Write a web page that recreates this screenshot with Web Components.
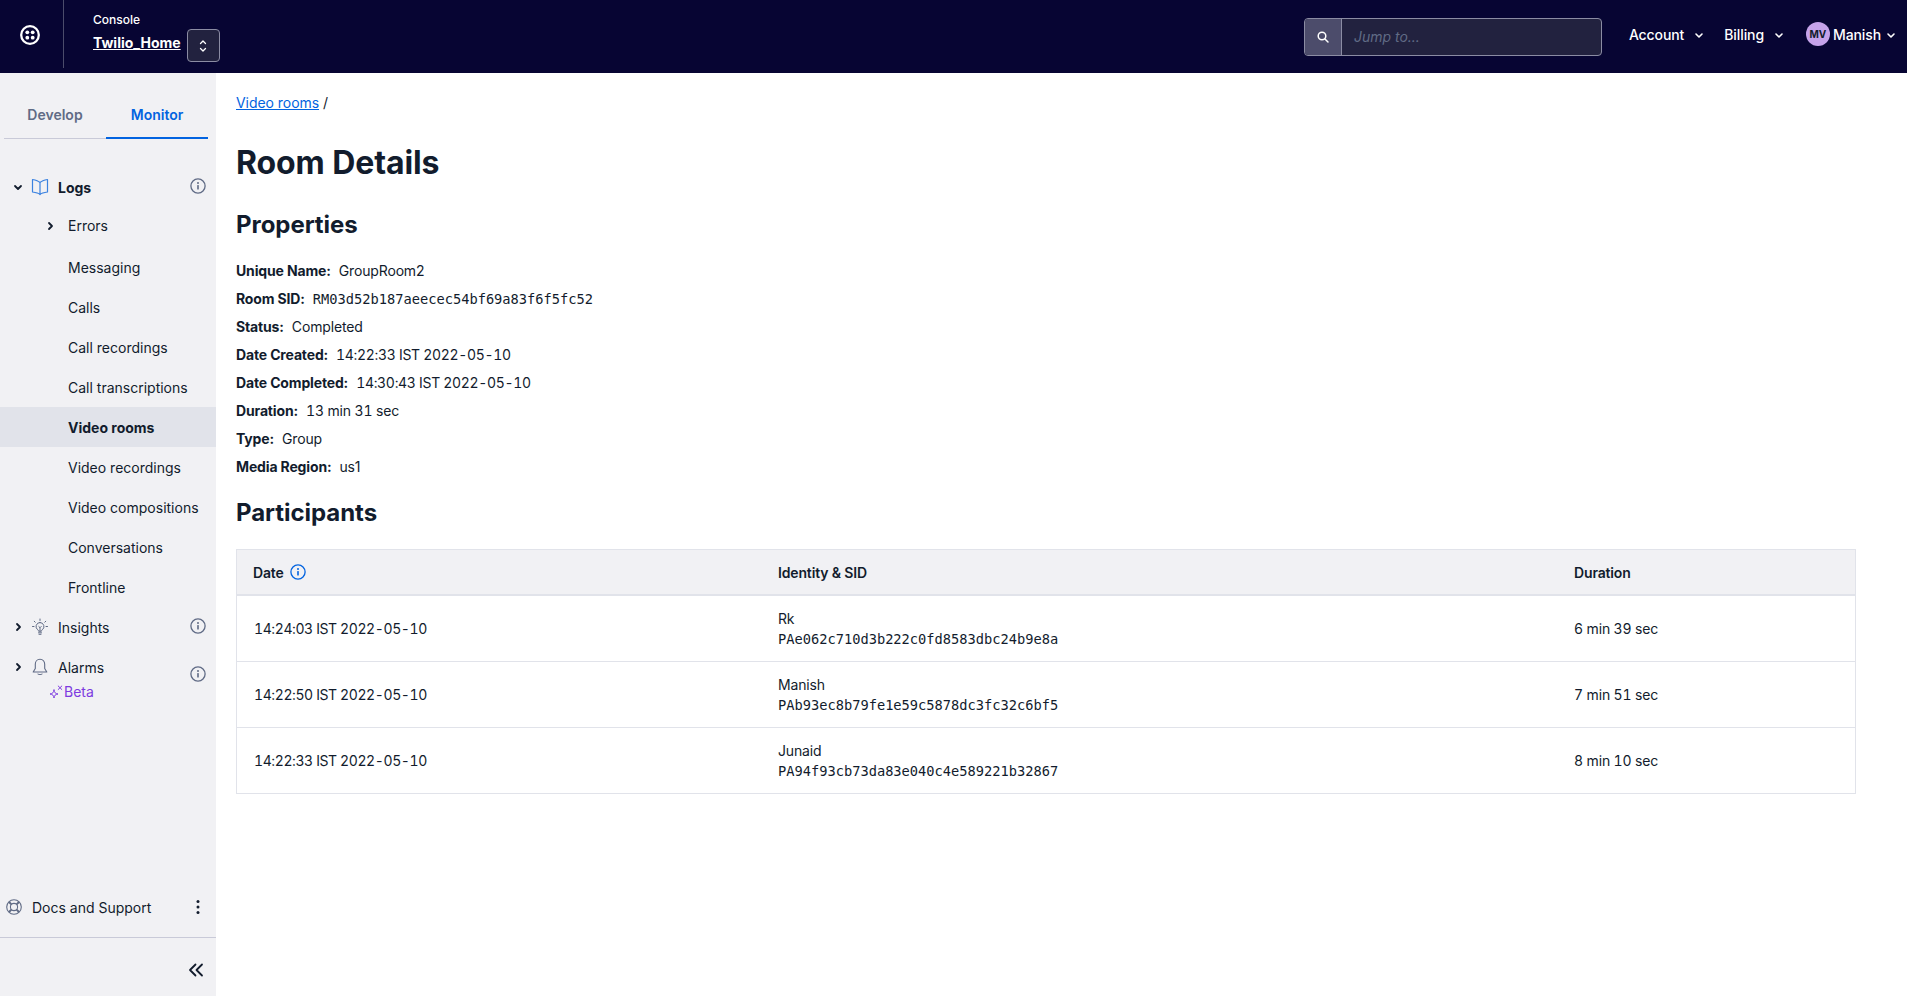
<!DOCTYPE html>
<html>
<head>
<meta charset="utf-8">
<style>
  html, body { margin: 0; height: 100%; }
  body { font-family: "Inter", sans-serif; color: #121c2d; background: #fff; overflow: hidden; }
  app-shell { height: 996px; }
</style>
</head>
<body>
<app-shell>
  <top-bar slot="top"></top-bar>
  <side-nav slot="side"></side-nav>
  <room-details></room-details>
</app-shell>

<script>
const infoIcon = (color, size) => `<svg width="${size}" height="${size}" viewBox="0 0 16 16" fill="none"><circle cx="8" cy="8" r="7.1" stroke="${color}" stroke-width="1.300"/><circle cx="8" cy="4.900" r="1" fill="${color}"/><rect x="7.200" y="6.900" width="1.600" height="4.600" rx=".6" fill="${color}"/></svg>`;
const chevron = (dir, color, w) => {
  const d = dir === "down" ? "M2 4l3 3 3-3" : dir === "right" ? "M4 2l3 3-3 3" : "";
  return `<svg width="10" height="10" viewBox="0 0 10 10" fill="none"><path d="${d}" stroke="${color}" stroke-width="${w}" stroke-linecap="round" stroke-linejoin="round"/></svg>`;
};

class AppShell extends HTMLElement {
  constructor() {
    super();
    this.attachShadow({mode: "open"}).innerHTML = `
    <style>
      :host { display: grid; grid-template-rows: 73px 1fr; grid-template-columns: 216px 1fr; }
      .top { grid-column: 1 / 3; }
    </style>
    <div class="top"><slot name="top"></slot></div>
    <slot name="side"></slot>
    <slot></slot>`;
  }
}

class TopBar extends HTMLElement {
  constructor() {
    super();
    this.attachShadow({mode: "open"}).innerHTML = `
    <style>
      :host { display: flex; align-items: center; height: 73px; background: #070533; color: #fff; font-size: 14px; }
      .logo { width: 64px; height: 68px; display: flex; align-items: center; justify-content: center; border-right: 1px solid #4b4c6b; flex: none; align-self: flex-start; padding: 1px 4px 0 0; box-sizing: border-box; }
      .acct { margin-left: 29px; display: flex; flex-direction: column; align-self: flex-start; padding-top: 12px; }
      .acct small { font-size: 12px; font-weight: 500; line-height: 16px; }
      .acct a { font-size: 14px; font-weight: 700; line-height: 20px; margin-top: 5px; text-decoration: underline; }
      .switch { width: 33px; height: 33px; margin: 29px 0 0 6px; box-sizing: border-box; border: 1px solid #8b8ca3; border-radius: 4px; background: #22223f; display: flex; align-items: center; justify-content: center; align-self: flex-start; }
      .spacer { flex: 1; }
      .search { display: flex; width: 298px; height: 38px; box-sizing: border-box; border: 1px solid #8b8ca3; border-radius: 4px; background: #22223f; margin-right: 27px; margin-top: 1px; overflow: hidden; }
      .search i { width: 36px; background: #4c4c6b; border-right: 1px solid #8b8ca3; display: flex; align-items: center; justify-content: center; flex: none; }
      .search span { font-style: italic; color: #606b85; padding-left: 12px; line-height: 36px; font-size: 14px; }
      .menu { display: flex; align-items: center; gap: 10px; font-weight: 500; font-size: 14px; margin-top: -5px; letter-spacing: -.1px; }
      .menu svg { margin-top: 2px; }
      .account { margin-right: 20px; }
      .billing { margin-right: 22px; }
      .avatar { width: 24px; height: 24px; border-radius: 50%; background: #c5a3ea; color: #121c2d; font-size: 10px; font-weight: 700; display: flex; align-items: center; justify-content: center; margin-right: -6px; letter-spacing: 0; }
      .user { gap: 9px; margin-right: 11px; }
      .user span:nth-child(2) { margin-right: -4px; }
    </style>
    <div class="logo">
      <svg width="20" height="20" viewBox="0 0 20 20" fill="none"><circle cx="10" cy="10" r="8.8" stroke="#fff" stroke-width="2.3"/><circle cx="7.3" cy="7.3" r="1.9" fill="#fff"/><circle cx="12.7" cy="7.3" r="1.9" fill="#fff"/><circle cx="7.3" cy="12.7" r="1.9" fill="#fff"/><circle cx="12.7" cy="12.7" r="1.9" fill="#fff"/></svg>
    </div>
    <div class="acct">
      <small>Console</small>
      <a>Twilio_Home</a>
    </div>
    <div class="switch">
      <svg width="10" height="16" viewBox="0 0 10 16" fill="none"><path d="M2.5 5.5L5 3l2.500 2.500M2.500 10.500L5 13l2.500-2.500" stroke="#fff" stroke-width="1.300" stroke-linecap="round" stroke-linejoin="round"/></svg>
    </div>
    <div class="spacer"></div>
    <div class="search">
      <i><svg width="14" height="14" viewBox="0 0 14 14" fill="none"><circle cx="6" cy="6" r="3.800" stroke="#fff" stroke-width="1.500"/><path d="M9 9l3 3" stroke="#fff" stroke-width="1.500" stroke-linecap="round"/></svg></i>
      <span>Jump to...</span>
    </div>
    <div class="menu account"><span>Account</span>${chevron("down", "#fff", 1.6)}</div>
    <div class="menu billing"><span>Billing</span>${chevron("down", "#fff", 1.6)}</div>
    <div class="menu user"><span class="avatar">MV</span><span>Manish</span>${chevron("down", "#fff", 1.6)}</div>`;
  }
}

class NavItem extends HTMLElement {
  constructor() {
    super();
    this.attachShadow({mode: "open"}).innerHTML = `
    <style>
      :host { display: flex; align-items: center; height: 40px; padding-left: 68px; font-size: 14px; color: #121c2d; }
      :host([selected]) { background: #e1e3ea; font-weight: 700; }
    </style>
    <slot></slot>`;
  }
}

class NavGroup extends HTMLElement {
  constructor() {
    super();
    const open = this.hasAttribute("open");
    const bold = this.hasAttribute("bold");
    this.attachShadow({mode: "open"}).innerHTML = `
    <style>
      :host { display: flex; align-items: center; height: 40px; font-size: 14px; position: relative; font-weight: ${bold ? 700 : 400}; }
      .chev { width: 10px; margin-left: 13px; display: flex; }
      .icon { width: 18px; height: 18px; margin-left: 8px; display: flex; }
      .label { margin-left: 9px; }
      .info { position: absolute; right: 10px; top: 11px; display: flex; }
      :host([low]) .info { top: 19px; }
    </style>
    <span class="chev">${chevron(open ? "down" : "right", "#121c2d", 1.8)}</span>
    <span class="icon"><slot name="icon"></slot></span>
    <span class="label"><slot></slot></span>
    <span class="info">${infoIcon("#606b85", 16)}</span>`;
  }
}

class SideNav extends HTMLElement {
  constructor() {
    super();
    this.attachShadow({mode: "open"}).innerHTML = `
    <style>
      :host { display: flex; flex-direction: column; background: #f1f1f4; height: 923px; box-sizing: border-box; }
      .tabs { display: flex; height: 66px; margin: 0 8px 0 4px; border-bottom: 1px solid #c9cad8; font-size: 14px; font-weight: 600; box-sizing: border-box; }
      .tabs span { flex: 1; display: flex; align-items: center; justify-content: center; color: #606b85; margin-bottom: -1px; padding-top: 17px; box-sizing: border-box; }
      .tabs .on { color: #0263e0; border-bottom: 2px solid #0263e0; flex: none; width: 102px; padding-top: 18px; }
      nav { padding-top: 28px; }
      .sub { display: flex; align-items: center; height: 37px; font-size: 14px; padding-left: 45px; gap: 13px; margin-bottom: 3px; }
      .beta { position: absolute; left: 49px; top: 36px; display: flex; align-items: center; color: #7d3be0; font-size: 14px; font-weight: 400; gap: 0; }
      .alarms { height: 40px; position: relative; }
      .docs { margin-top: auto; display: flex; align-items: center; height: 40px; font-size: 14px; padding-left: 6px; }
      .docs span { margin-left: 10px; flex: 1; }
      .docs svg.more { margin-right: 16px; }
      .collapse { border-top: 1px solid #c9cad8; margin-top: 10px; height: 59px; box-sizing: border-box; display: flex; align-items: center; justify-content: flex-end; padding: 5px 12px 0 0; }
    </style>
    <div class="tabs"><span>Develop</span><span class="on">Monitor</span></div>
    <nav>
      <nav-group open bold>
        <svg slot="icon" width="18" height="18" viewBox="0 0 18 18" fill="none" stroke="#3b82e0" stroke-width="1.200" stroke-linejoin="round"><path d="M9 4.500C7.500 3 4.500 2 1.500 1.500v12.500c3 .4 6 1 7.500 2.500 1.500-1.500 4.500-2.100 7.500-2.500V1.500C13.500 2 10.500 3 9 4.500zM9 4.500V16.500"/></svg>
        Logs
      </nav-group>
      <div class="sub">${chevron("right", "#121c2d", 1.8)}<span>Errors</span></div>
      <nav-item>Messaging</nav-item>
      <nav-item>Calls</nav-item>
      <nav-item>Call recordings</nav-item>
      <nav-item>Call transcriptions</nav-item>
      <nav-item selected>Video rooms</nav-item>
      <nav-item>Video recordings</nav-item>
      <nav-item>Video compositions</nav-item>
      <nav-item>Conversations</nav-item>
      <nav-item>Frontline</nav-item>
      <nav-group>
        <svg slot="icon" width="18" height="18" viewBox="0 0 18 18" fill="none" stroke="#606b85" stroke-width="1" stroke-linecap="round"><path d="M9 4.500a4 4 0 0 0-2.200 7.300c.5.400.7.900.7 1.400h3c0-.5.200-1 .7-1.400A4 4 0 0 0 9 4.500zM7.500 14.800h3M8 16.300h2M9 1v1.500M3.200 3.200l1 1M14.800 3.200l-1 1M1.500 8.500H3M15 8.500h1.500M7.800 8.500l1.200 1.200 1.200-1.200M9 9.700v3.500"/></svg>
        Insights
      </nav-group>
      <div class="alarms">
        <nav-group low>
          <svg slot="icon" width="18" height="18" viewBox="0 0 18 18" fill="none" stroke="#606b85" stroke-width="1.100" stroke-linejoin="round" stroke-linecap="round"><path d="M9 1.300c-3 0-4.700 2.200-4.700 5v4.200L2.200 14h13.600l-2.100-3.500V6.300c0-2.800-1.700-5-4.700-5zM7 16c.5.700 3.500.7 4 0"/></svg>
          Alarms
        </nav-group>
        <div class="beta">
          <svg width="15" height="16" viewBox="0 0 15 16" fill="none" stroke="#7d3be0" stroke-width="1" stroke-linecap="round" stroke-linejoin="round"><path d="M5 6c.3 2.600 1.400 3.700 4 4-2.600.3-3.700 1.400-4 4-.3-2.600-1.400-3.700-4-4 2.600-.3 3.700-1.400 4-4zM9.200 2l3.600 3.500M12.800 2L9.200 5.500"/></svg>
          <span>Beta</span>
        </div>
      </div>
    </nav>
    <div class="docs">
      <svg width="16" height="16" viewBox="0 0 16 16" fill="none" stroke="#606b85" stroke-width="1.100"><circle cx="8" cy="8" r="7.300"/><circle cx="8" cy="8" r="3.600"/><path d="M3 3l2.400 2.400M13 3l-2.400 2.400M3 13l2.400-2.400M13 13l-2.400-2.400" stroke-width="2"/></svg>
      <span>Docs and Support</span>
      <svg class="more" width="4" height="16" viewBox="0 0 4 16" fill="#121c2d"><circle cx="2" cy="2.500" r="1.500"/><circle cx="2" cy="8" r="1.500"/><circle cx="2" cy="13.500" r="1.500"/></svg>
    </div>
    <div class="collapse">
      <svg width="16" height="14" viewBox="0 0 16 14" fill="none" stroke="#121c2d" stroke-width="1.800" stroke-linecap="round" stroke-linejoin="round"><path d="M7.500 1.500L2 7l5.500 5.500M14 1.500L8.500 7l5.500 5.500"/></svg>
    </div>`;
  }
}

class PropRow extends HTMLElement {
  constructor() {
    super();
    this.attachShadow({mode: "open"}).innerHTML = `
    <style>
      :host { display: flex; align-items: center; height: 28px; font-size: 14px; gap: 8px; }
      b { font-weight: 700; }
      ::slotted(code) { font-family: "DejaVu Sans Mono", monospace; font-size: 13.700px; letter-spacing: 0; }
      ::slotted(time) { font-variant-numeric: tabular-nums; letter-spacing: -.32px; }
      ::slotted(span) { font-variant-numeric: tabular-nums; }
    </style>
    <b>${this.getAttribute("label")}:</b><span><slot></slot></span>`;
  }
}

class ParticipantRow extends HTMLElement {
  constructor() {
    super();
    this.attachShadow({mode: "open"}).innerHTML = `
    <style>
      :host { display: grid; grid-template-columns: var(--cols); height: 66px; box-sizing: border-box; border-top: 1px solid #e1e3ea; align-items: center; font-size: 14px; }
      :host(:first-of-type) { border-top: 0; height: 65px; }
      .date { padding-left: 17px; font-variant-numeric: tabular-nums; letter-spacing: -.4px; }
      .id { line-height: 20px; margin-top: 1px; }
      .dur { font-variant-numeric: tabular-nums; }
      code { display: block; font-family: "DejaVu Sans Mono", monospace; font-size: 13.700px; line-height: 20px; letter-spacing: 0; }
    </style>
    <div class="date">${this.getAttribute("date")}</div>
    <div class="id">${this.getAttribute("who")}<code>${this.getAttribute("sid")}</code></div>
    <div class="dur">${this.getAttribute("dur")}</div>`;
  }
}

class RoomDetails extends HTMLElement {
  constructor() {
    super();
    this.attachShadow({mode: "open"}).innerHTML = `
    <style>
      :host { display: block; padding: 20px 51px 0 20px; font-size: 14px; letter-spacing: -.15px; }
      .crumb { line-height: 20px; height: 20px; letter-spacing: -.05px; }
      .crumb a { color: #0263e0; text-decoration: underline; }
      h1 { font-size: 32px; line-height: 40px; font-weight: 700; margin: 30px 0 0; letter-spacing: -.1px; }
      h2 { font-size: 24px; line-height: 32px; font-weight: 700; margin: 26px 0 0; letter-spacing: -.05px; }
      .props { margin-top: 15px; }
      .part { margin-top: 17px; }
      .table { margin-top: 20px; border: 1px solid #e1e3ea; --cols: 541px 796px 1fr; }
      .head { display: grid; grid-template-columns: var(--cols); height: 46px; background: #f1f1f4; border-bottom: 2px solid #e1e3ea; align-items: center; font-weight: 600; font-size: 14px; box-sizing: border-box; }
      .head div:first-child { padding-left: 16px; display: flex; align-items: center; gap: 6px; }
    </style>
    <div class="crumb"><a>Video rooms</a> /</div>
    <h1>Room Details</h1>
    <h2>Properties</h2>
    <div class="props">
      <prop-row label="Unique Name">GroupRoom2</prop-row>
      <prop-row label="Room SID"><code>RM03d52b187aeecec54bf69a83f6f5fc52</code></prop-row>
      <prop-row label="Status">Completed</prop-row>
      <prop-row label="Date Created"><time>14:22:33 IST 2022-05-10</time></prop-row>
      <prop-row label="Date Completed"><time>14:30:43 IST 2022-05-10</time></prop-row>
      <prop-row label="Duration"><span>13 min 31 sec</span></prop-row>
      <prop-row label="Type">Group</prop-row>
      <prop-row label="Media Region">us1</prop-row>
    </div>
    <h2 class="part">Participants</h2>
    <div class="table">
      <div class="head"><div>Date ${infoIcon("#0263e0", 16)}</div><div>Identity &amp; SID</div><div>Duration</div></div>
      <participant-row date="14:24:03 IST 2022-05-10" who="Rk" sid="PAe062c710d3b222c0fd8583dbc24b9e8a" dur="6 min 39 sec"></participant-row>
      <participant-row date="14:22:50 IST 2022-05-10" who="Manish" sid="PAb93ec8b79fe1e59c5878dc3fc32c6bf5" dur="7 min 51 sec"></participant-row>
      <participant-row date="14:22:33 IST 2022-05-10" who="Junaid" sid="PA94f93cb73da83e040c4e589221b32867" dur="8 min 10 sec"></participant-row>
    </div>`;
  }
}

customElements.define("nav-item", NavItem);
customElements.define("nav-group", NavGroup);
customElements.define("prop-row", PropRow);
customElements.define("participant-row", ParticipantRow);
customElements.define("top-bar", TopBar);
customElements.define("side-nav", SideNav);
customElements.define("room-details", RoomDetails);
customElements.define("app-shell", AppShell);
</script>
</body>
</html>
